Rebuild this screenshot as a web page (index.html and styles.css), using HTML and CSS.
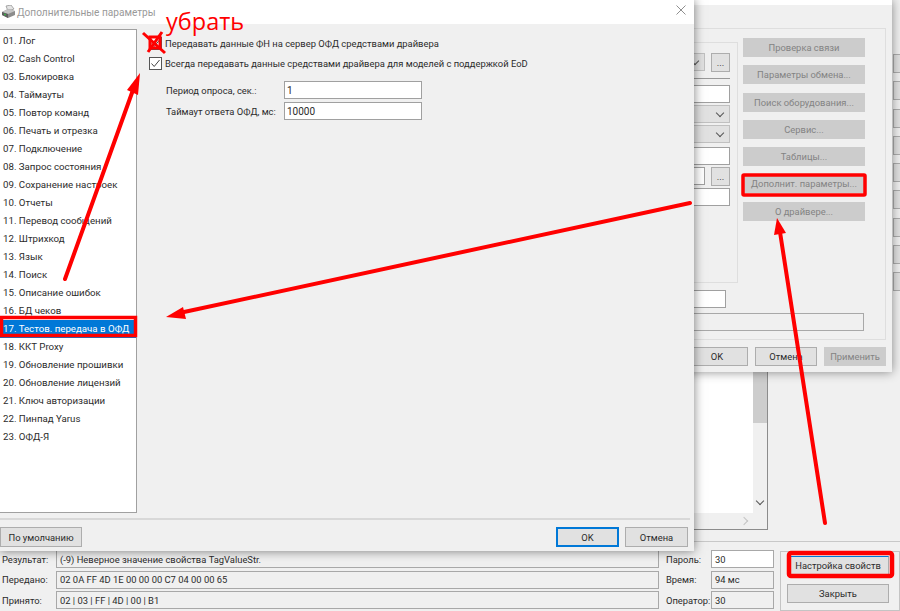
FILE: index.html
```html
<!DOCTYPE html>
<html lang="ru">
<head>
    <meta charset="UTF-8">
    <meta name="viewport" content="width=device-width, initial-scale=1.0">
    <title>Дополнительные параметры</title>
    <link rel="stylesheet" href="styles.css">
</head>
<body>
<div class="desktop">

    <!-- Главное окно теста драйвера -->
    <div class="window-main">
        <div class="main-top">
            <div class="log-frame">
                <div class="log-row">
                    <div class="log-text"></div>
                    <div class="vscroll">
                        <div class="vthumb"></div>
                        <span class="chev chev-down"></span>
                    </div>
                </div>
                <div class="hscroll"><span class="chev chev-right"></span></div>
            </div>
            <div class="side-buttons">
                <div class="btn side-btn"></div>
                <div class="btn side-btn"></div>
                <div class="btn side-btn"></div>
                <div class="btn side-btn"></div>
                <div class="btn side-btn"></div>
                <div class="btn side-btn"></div>
                <div class="btn side-btn"></div>
                <div class="btn side-btn"></div>
                <div class="btn side-btn"></div>
            </div>
        </div>
        <div class="status">
            <div class="status-grid status-left">
                <span>Результат:</span><div class="field">(-9) Неверное значение свойства TagValueStr.</div>
                <span>Передано:</span><div class="field">02 0A FF 4D 1E 00 00 00 C7 04 00 00 65</div>
                <span>Принято:</span><div class="field">02 | 03 | FF | 4D | 00 | B1</div>
            </div>
            <div class="status-grid status-mid">
                <span>Пароль:</span><div class="field field-white">30</div>
                <span>Время:</span><div class="field">94 мс</div>
                <span>Оператор:</span><div class="field">30</div>
            </div>
            <div class="status-actions">
                <div class="btn action-btn action-focus">Настройка свойств</div>
                <div class="btn action-btn">Закрыть</div>
            </div>
        </div>
    </div>

    <!-- Окно свойств (заблокировано) -->
    <div class="window-props">
        <div class="props-title"></div>
        <div class="props-panel">
            <div class="props-top">
                <div class="props-group">
                    <div class="group-row">
                        <div class="combo combo-off"><span class="chev chev-down"></span></div>
                        <div class="btn dots">...</div>
                    </div>
                    <div class="group-line"></div>
                    <div class="input"></div>
                    <div class="combo"><span class="chev chev-down"></span></div>
                    <div class="combo"><span class="chev chev-down"></span></div>
                    <div class="input input-gap"></div>
                    <div class="group-row group-row-tight">
                        <div class="input input-short"></div>
                        <div class="btn dots">...</div>
                    </div>
                    <div class="input"></div>
                </div>
                <div class="props-buttons">
                    <div class="btn btn-off">Проверка связи</div>
                    <div class="btn btn-off">Параметры обмена...</div>
                    <div class="btn btn-off">Поиск оборудования...</div>
                    <div class="btn btn-off">Сервис...</div>
                    <div class="btn btn-off">Таблицы...</div>
                    <div class="btn btn-off">Дополнит. параметры...</div>
                    <div class="btn btn-off">О драйвере...</div>
                </div>
            </div>
            <div class="input input-model"></div>
            <div class="field field-wide"></div>
        </div>
        <div class="props-footer">
            <div class="btn foot-btn">OK</div>
            <div class="btn foot-btn">Отмена</div>
            <div class="btn foot-btn btn-off">Применить</div>
        </div>
    </div>

    <!-- Диалог дополнительных параметров -->
    <div class="window-params">
        <div class="params-title">
            <svg class="printer" width="14" height="14" viewBox="0 0 14 14">
                <path d="M4 1 9 0 12 4 6 6Z" fill="#e4e4e4" stroke="#8a8a8a" stroke-width=".7"/>
                <path d="M0 7 6 4 13 6 13 10 6 13 0 10Z" fill="#8c8c8c"/>
                <path d="M0 7 6 9 13 6 6 4Z" fill="#c4c4c4"/>
                <path d="M0 10 6 13 6 9 0 7Z" fill="#5e5e5e"/>
                <circle cx="3" cy="9.6" r="1" fill="#3fae49"/>
            </svg>
            <span class="params-caption">Дополнительные параметры</span>
            <svg class="close-x" width="10" height="10" viewBox="0 0 10 10">
                <path d="M.5.5 9.5 9.5M9.5.5.5 9.5" stroke="#8f8f8f" stroke-width="1" fill="none"/>
            </svg>
        </div>
        <div class="params-body">
            <ul class="page-list">
                <li>01. Лог</li>
                <li>02. Cash Control</li>
                <li>03. Блокировка</li>
                <li>04. Таймауты</li>
                <li>05. Повтор команд</li>
                <li>06. Печать и отрезка</li>
                <li>07. Подключение</li>
                <li>08. Запрос состояния</li>
                <li>09. Сохранение настроек</li>
                <li>10. Отчеты</li>
                <li>11. Перевод сообщений</li>
                <li>12. Штрихкод</li>
                <li>13. Язык</li>
                <li>14. Поиск</li>
                <li>15. Описание ошибок</li>
                <li>16. БД чеков</li>
                <li class="selected">17. Тестов. передача в ОФД</li>
                <li>18. ККТ Proxy</li>
                <li>19. Обновление прошивки</li>
                <li>20. Обновление лицензий</li>
                <li>21. Ключ авторизации</li>
                <li>22. Пинпад Yarus</li>
                <li>23. ОФД-Я</li>
            </ul>
            <div class="page">
                <label class="check">
                    <span class="box"><svg width="11" height="11" viewBox="0 0 11 11"><path d="M1.5 5.5 4.2 8.5 9.5 2" stroke="#444" stroke-width="1" fill="none"/></svg></span>
                    Передавать данные ФН на сервер ОФД средствами драйвера
                </label>
                <label class="check check-second">
                    <span class="box"><svg width="11" height="11" viewBox="0 0 11 11"><path d="M1.5 5.5 4.2 8.5 9.5 2" stroke="#444" stroke-width="1" fill="none"/></svg></span>
                    Всегда передавать данные средствами драйвера для моделей с поддержкой EoD
                </label>
                <div class="param-row param-first">
                    <span class="param-label">Период опроса, сек.:</span>
                    <div class="param-input">1</div>
                </div>
                <div class="param-row">
                    <span class="param-label">Таймаут ответа ОФД, мс:</span>
                    <div class="param-input">10000</div>
                </div>
            </div>
        </div>
        <div class="params-footer">
            <div class="btn default-btn">По умолчанию</div>
            <div class="footer-right">
                <div class="btn dlg-btn dlg-primary">OK</div>
                <div class="btn dlg-btn">Отмена</div>
            </div>
        </div>
    </div>

    <!-- Пометки красным поверх скриншота -->
    <div class="note">убрать</div>
    <svg class="marks" width="900" height="611" viewBox="0 0 900 611">
        <g fill="none" stroke="#f00">
            <rect x="1.5" y="317.5" width="134" height="18" stroke-width="3.5"/>
            <rect x="743" y="175" width="122" height="20" rx="1" stroke-width="3.5"/>
            <rect x="789" y="553" width="103" height="23" rx="2" stroke-width="4.5"/>
            <rect x="150" y="37" width="10" height="11" stroke-width="3"/>
            <path d="M143 33 165 53M162 32 148 52" stroke-width="3"/>
            <path d="M65 279 133 90" stroke-width="4" stroke-linecap="round"/>
            <path d="M690 203 184 312" stroke-width="4" stroke-linecap="round"/>
            <path d="M825 523 780 232" stroke-width="4" stroke-linecap="round"/>
        </g>
        <g fill="#f00">
            <path d="M140 73 127 90 138 95Z"/>
            <path d="M166 317 183 307 186 319Z"/>
            <path d="M777 218 774 235 786 233Z"/>
        </g>
    </svg>
</div>
</body>
</html>
```

FILE: styles.css
```css
* {
    box-sizing: border-box;
}

body {
    margin: 0;
    font-family: Roboto, sans-serif;
    font-size: 9.4px;
    color: #2b2b2b;
}

.desktop {
    position: relative;
    width: 900px;
    height: 611px;
    overflow: hidden;
    background: #f0f0f0;
}

/* Общие элементы */
.btn {
    display: flex;
    align-items: center;
    justify-content: center;
    background: #e1e1e1;
    border: 1px solid #adadad;
    white-space: nowrap;
}

.btn-off {
    background: #ccc;
    border-color: #ccc;
    color: #838383;
}

.field {
    display: flex;
    align-items: center;
    height: 18px;
    padding-left: 3px;
    background: #f0f0f0;
    border: 1px solid #a8a8a8;
    white-space: nowrap;
}

.field-white {
    background: #fff;
}

.chev {
    display: block;
    width: 6px;
    height: 6px;
    border-right: 1.5px solid #555;
    border-bottom: 1.5px solid #555;
}

.chev-down {
    transform: rotate(45deg);
}

.chev-right {
    transform: rotate(-45deg);
    border-color: #c4c4c4;
}

/* Главное окно */
.window-main {
    position: absolute;
    inset: 0;
}

.main-top {
    display: flex;
    height: 542px;
    border-bottom: 1px solid #c8c8c8;
}

.log-frame {
    display: flex;
    flex: none;
    flex-direction: column;
    width: 768px;
    height: 530px;
    border-right: 1px solid #8c8c8c;
    border-bottom: 1px solid #8c8c8c;
}

.log-row {
    flex: 1;
    display: flex;
}

.log-text {
    flex: 1;
    background: #fff;
}

.vscroll {
    position: relative;
    width: 14px;
}

.vthumb {
    height: 83px;
    margin-top: 340px;
    background: #cdcdcd;
}

.vscroll .chev {
    position: absolute;
    left: 4px;
    bottom: 9px;
}

.hscroll {
    display: flex;
    justify-content: flex-end;
    align-items: center;
    height: 16px;
    padding-right: 20px;
}

.side-buttons {
    display: flex;
    flex: none;
    flex-direction: column;
    gap: 8.3px;
    margin-left: 125px;
    padding-top: 54px;
}

.side-btn {
    width: 30px;
    height: 19px;
}

.status {
    display: flex;
    align-items: flex-start;
}

.status-grid {
    display: grid;
    align-items: center;
    grid-auto-rows: 18px;
    row-gap: 2.5px;
    padding-top: 8px;
}

.status-grid span {
    padding-left: 2px;
}

.status-left {
    grid-template-columns: 56px 603px;
}

.status-mid {
    grid-template-columns: 47px 63px;
    margin-left: 5px;
}

.status-actions {
    display: flex;
    flex-direction: column;
    gap: 9px;
    width: 120px;
    height: 60px;
    margin: 9px 0 0 6px;
    padding: 4px 0 0 6px;
    border: 1px solid #c4c4c4;
}

.action-btn {
    width: 102px;
    height: 19px;
}

.action-focus {
    border-top-color: #0078d7;
}

/* Окно свойств */
.window-props {
    position: absolute;
    left: 594px;
    top: 0;
    width: 298px;
    height: 372px;
    padding-right: 6px;
    background: #f0f0f0;
    box-shadow: 0 0 10px rgba(0, 0, 0, 0.45);
}

.props-title {
    height: 5px;
    margin-right: -6px;
    background: #fff;
}

.props-panel {
    height: 312px;
    margin-top: 23px;
    padding: 9px 20px 0 0;
    border: 1px solid #dedede;
}

.props-top {
    display: flex;
    align-items: flex-start;
}

.props-group {
    display: flex;
    flex-direction: column;
    width: 144px;
    height: 241px;
    margin-top: 4px;
    padding: 10px 7px 0 0;
    border: 1px solid #dedede;
}

.group-row {
    display: flex;
    gap: 6px;
}

.group-row-tight {
    margin: 2px 0 2px;
}

.combo-off {
    flex: 1;
    height: 18px;
    background: #ccc;
}

.combo {
    display: flex;
    align-items: center;
    justify-content: flex-end;
    height: 18px;
    margin-top: 2px;
    padding: 0 6px 3px 0;
    background: #e1e1e1;
    border: 1px solid #c0c0c0;
}

.group-row .combo {
    margin-top: 0;
}

.dots {
    flex: none;
    width: 19px;
    height: 19px;
}

.group-line {
    height: 1px;
    margin: 6px 0;
    background: #999;
}

.input {
    height: 18px;
    background: #fff;
    border: 1px solid #a0a0a0;
}

.input-gap {
    margin-top: 4px;
}

.input-short {
    flex: 1;
}

.props-buttons {
    display: flex;
    flex-direction: column;
    gap: 8.3px;
    width: 123px;
    margin-left: 5px;
}

.props-buttons .btn {
    height: 19px;
}

.input-model {
    width: 131px;
    margin-top: 7px;
}

.field-wide {
    width: 269px;
    margin-top: 5px;
}

.props-footer {
    display: flex;
    justify-content: flex-end;
    gap: 7px;
    margin-top: 7px;
}

.foot-btn {
    width: 62px;
    height: 19px;
}

/* Диалог дополнительных параметров */
.window-params {
    position: absolute;
    left: 0;
    top: 0;
    display: flex;
    flex-direction: column;
    width: 694px;
    height: 551px;
    background: #f0f0f0;
    box-shadow: 0 0 10px rgba(0, 0, 0, 0.5);
}

.params-title {
    display: flex;
    align-items: center;
    flex: none;
    height: 24px;
    padding: 0 8px 0 2px;
    background: #fff;
}

.printer {
    margin-right: 1px;
}

.params-caption {
    flex: 1;
    font-size: 10.1px;
    color: #999;
}

.close-x {
    margin-bottom: 5px;
}

.params-body {
    flex: 1;
    display: flex;
    padding-top: 5px;
}

.page-list {
    width: 137px;
    height: 484px;
    margin: 0;
    padding: 2px 0 0;
    font-size: 9.7px;
    list-style: none;
    background: #fff;
    border: 1px solid #a0a0a0;
    border-left: none;
}

.page-list li {
    height: 18px;
    padding-left: 3px;
    line-height: 18px;
    white-space: nowrap;
}

.page-list .selected {
    background: #0078d7;
    color: #fff;
}

.page {
    flex: 1;
    padding: 7px 0 0 12px;
}

.check {
    display: flex;
    align-items: center;
    gap: 3px;
    height: 14px;
}

.check-second {
    margin-top: 6px;
}

.box {
    display: flex;
    align-items: center;
    justify-content: center;
    width: 13px;
    height: 13px;
    background: #fff;
    border: 1px solid #555;
}

.param-row {
    display: flex;
    align-items: center;
    margin-top: 3px;
    padding-left: 17px;
}

.param-first {
    margin-top: 11px;
}

.param-label {
    width: 118px;
    white-space: nowrap;
}

.param-input {
    display: flex;
    align-items: center;
    width: 138px;
    height: 18px;
    padding-left: 2px;
    font-size: 10px;
    background: #fff;
    border: 1px solid #a0a0a0;
}

.params-footer {
    display: flex;
    justify-content: space-between;
    flex: none;
    height: 33px;
    margin-right: 4px;
    padding-top: 7px;
    border-top: 2px solid #d8d8d8;
}

.default-btn {
    width: 82px;
    height: 20px;
}

.footer-right {
    display: flex;
    gap: 6px;
    padding-right: 2px;
}

.dlg-btn {
    width: 63px;
    height: 20px;
}

.dlg-primary {
    border: 2px solid #0078d7;
}

/* Красные пометки */
.note {
    position: absolute;
    left: 166px;
    top: 5px;
    font-family: "Open Sans", sans-serif;
    font-size: 23.5px;
    color: #f00;
}

.marks {
    position: absolute;
    left: 0;
    top: 0;
}
```
